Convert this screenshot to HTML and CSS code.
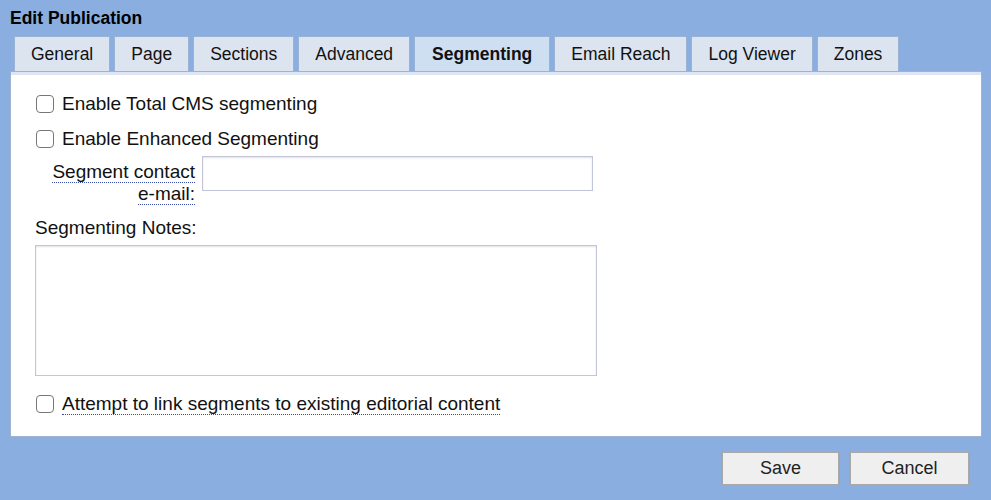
FILE: index.html
```html
<!DOCTYPE html>
<html>
<head>
<meta charset="utf-8">
<link rel="stylesheet" href="styles.css">
</head>
<body>
<div class="dialog">
  <h1 class="title">Edit Publication</h1>
  <div class="tabs">
    <div class="tab">General</div>
    <div class="tab">Page</div>
    <div class="tab">Sections</div>
    <div class="tab">Advanced</div>
    <div class="tab active">Segmenting</div>
    <div class="tab">Email Reach</div>
    <div class="tab">Log Viewer</div>
    <div class="tab">Zones</div>
  </div>
  <div class="panel">
    <label class="check-row"><input type="checkbox" class="cb"><span>Enable Total CMS segmenting</span></label>
    <label class="check-row"><input type="checkbox" class="cb"><span>Enable Enhanced Segmenting</span></label>
    <div class="contact-row">
      <div class="contact-label"><span class="dotted">Segment contact</span><br><span class="dotted">e-mail:</span></div>
      <input type="text" class="text-input">
    </div>
    <div class="notes-label">Segmenting Notes:</div>
    <textarea class="notes"></textarea>
    <label class="check-row last"><input type="checkbox" class="cb"><span class="dotted">Attempt to link segments to existing editorial content</span></label>
  </div>
  <div class="buttons">
    <button class="btn save">Save</button>
    <button class="btn cancel">Cancel</button>
  </div>
</div>
</body>
</html>
```

FILE: styles.css
```css
html, body {
  margin: 0;
  padding: 0;
  background: #89aedf;
  font-family: "Liberation Sans", Arial, sans-serif;
  color: #111;
}
.dialog {
  padding: 8px 9px 0 10px;
  display: flex;
  flex-direction: column;
}
.title {
  margin: 0;
  font-size: 17.5px;
  line-height: 20px;
  font-weight: bold;
  color: #000;
}
.tabs {
  display: flex;
  gap: 4px;
  margin-top: 8px;
  padding-left: 4px;
}
.tab {
  height: 34px;
  line-height: 34px;
  padding: 0 16px;
  font-size: 17.5px;
  background: #dce4f0;
  border: 1px solid #9ab3d4;
  border-bottom: none;
  color: #111;
}
.tab.active {
  background: #cfdff2;
  font-weight: bold;
  padding: 0 17px;
}
.panel {
  background: #fff;
  border: 1px solid #9db3cf;
  box-shadow: inset 0 3px 0 #dde6f2;
  padding: 14px 24px 15px 24px;
  display: flex;
  flex-direction: column;
  align-items: flex-start;
  font-size: 19px;
}
.check-row {
  display: flex;
  align-items: center;
  height: 35px;
  gap: 8px;
  margin-left: 1px;
}
.check-row.last {
  margin-top: 11px;
  height: 34px;
}
.cb {
  appearance: none;
  -webkit-appearance: none;
  width: 18px;
  height: 18px;
  margin: 0;
  border: 1px solid #777;
  border-radius: 4px;
  background: #fff;
}
.dotted {
  border-bottom: 1px dotted #3a4bb0;
  line-height: 20px;
}
.contact-row {
  display: flex;
  align-items: flex-start;
  gap: 7px;
  margin-top: 0;
}
.contact-label {
  width: 160px;
  text-align: right;
  line-height: 22px;
  padding-top: 5px;
}
.text-input {
  width: 391px;
  height: 35px;
  box-sizing: border-box;
  border: 1px solid #c3c6d8;
  box-shadow: inset 0 1px 2px rgba(0,0,0,0.12);
  margin: 0;
  font-size: 16px;
}
.notes-label {
  margin-top: 12px;
  line-height: 22px;
}
.notes {
  margin-top: 6px;
  width: 562px;
  height: 131px;
  box-sizing: border-box;
  border: 1px solid #c3c6d8;
  box-shadow: inset 0 1px 2px rgba(0,0,0,0.12);
  resize: none;
}
.buttons {
  display: flex;
  justify-content: flex-end;
  gap: 11px;
  margin-top: 15px;
  padding-right: 13px;
}
.btn {
  height: 33px;
  font-family: "Liberation Sans", Arial, sans-serif;
  font-size: 18px;
  color: #222;
  background: #efefef;
  border: 1px solid #a9a9a9;
  box-shadow: 0 1px 1px rgba(0,0,0,0.15);
  padding: 0;
}
.btn.save { width: 117px; }
.btn.cancel { width: 119px; }
```
